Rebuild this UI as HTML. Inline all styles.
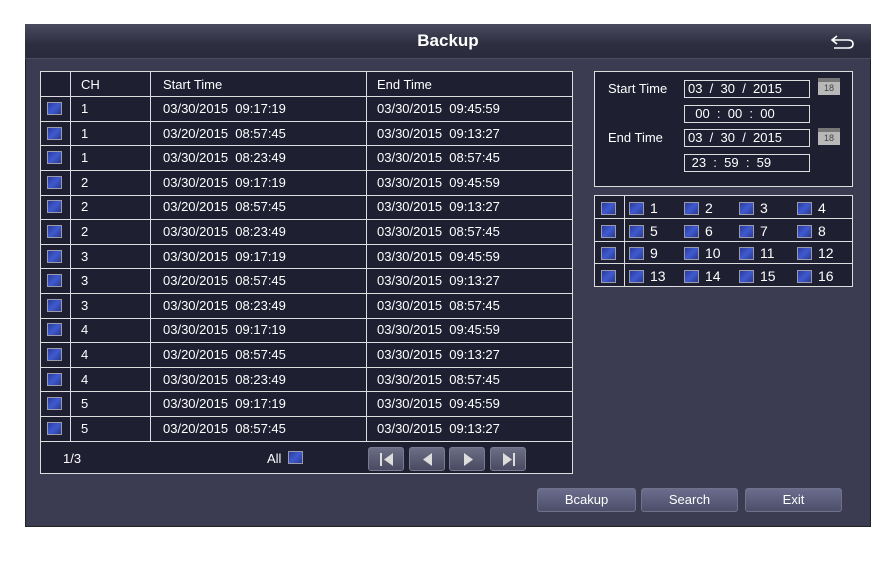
<!DOCTYPE html>
<html><head><meta charset="utf-8"><style>
*{margin:0;padding:0;box-sizing:border-box}
body{width:888px;height:565px;background:#fff;position:relative;overflow:hidden;font-family:"Liberation Sans",sans-serif;color:#fff;font-size:13px}
.p{position:absolute;left:25px;top:24px;width:846px;height:503px;background:#3b3c52;border:1px solid #222;}
.tb{position:absolute;left:25px;top:24px;width:846px;height:35px;background:linear-gradient(#4a4b5e,#2d2e40 60%,#2a2b3c);border-bottom:1px solid #4a4b60}
.tb span{position:absolute;left:0;right:0;top:7px;text-align:center;font-size:17px;font-weight:bold}
.a{position:absolute}
.tbl{position:absolute;left:40px;top:71px;width:533px;height:403px;background:#1e1f31;border:1px solid #ddd}
.hl{position:absolute;height:1px;background:#ddd;left:0;right:0}
.vl{position:absolute;width:1px;background:#ddd}
.t{position:absolute;font-size:13px;line-height:14px}
.cb{position:absolute;width:15px;height:13px;border:1px solid #9a9aaa;background:linear-gradient(135deg,#2a3a9a,#3f5ad0 50%,#2a3a90)}
.nb{position:absolute;top:447px;width:36px;height:24px;border-radius:3px;background:linear-gradient(#6c6e86,#4a4b62);border:1px solid #7a7b90}
.bt{position:absolute;top:488px;height:24px;border-radius:3px;background:linear-gradient(#6a6d8c,#4c4e6a);border:1px solid #70728a;text-align:center;line-height:22px;font-size:13px}
.rb{position:absolute;background:#1e1f31;border:1px solid #ddd}
.in{position:absolute;left:684px;width:126px;height:18px;border:1px solid #ddd;font-size:13px;line-height:16px;padding-left:3px;white-space:pre}
.cal{position:absolute;left:818px;width:22px;height:17px;background:#b8b8b8;border-top:4px solid #777;font-size:9px;color:#444;text-align:center;line-height:12px}
</style></head><body>
<div class="p"></div>
<div class="tb"><span>Backup</span>
<svg class="a" style="left:803px;top:8px" width="28" height="18"><path d="M9 4 L4 8 L9 12 M4 8 H20 Q25 8 25 12 Q25 16 20 16 H6" stroke="#fff" stroke-width="1.6" fill="none"/></svg></div>

<div class="tbl">
<div class="vl" style="left:29px;top:0;height:369px"></div>
<div class="vl" style="left:109px;top:0;height:369px"></div>
<div class="vl" style="left:325px;top:0;height:369px"></div>
<div class="t" style="left:40px;top:6px">CH</div>
<div class="t" style="left:122px;top:6px">Start Time</div>
<div class="t" style="left:336px;top:6px">End Time</div>
<div class="hl" style="top:24px"></div><div class="hl" style="top:49px"></div><div class="hl" style="top:73px"></div><div class="hl" style="top:98px"></div><div class="hl" style="top:123px"></div><div class="hl" style="top:147px"></div><div class="hl" style="top:172px"></div><div class="hl" style="top:196px"></div><div class="hl" style="top:221px"></div><div class="hl" style="top:246px"></div><div class="hl" style="top:270px"></div><div class="hl" style="top:295px"></div><div class="hl" style="top:319px"></div><div class="hl" style="top:344px"></div><div class="hl" style="top:369px"></div>
</div>
<div id="rows"></div>
<div class="t" style="left:63px;top:452px">1/3</div>
<div class="t" style="left:267px;top:452px">All</div>
<div class="cb" style="left:288px;top:451px"></div>
<div class="nb" style="left:368px"><svg width="36" height="24"><rect x="11" y="5" width="2" height="13" fill="#ddd"/><path d="M24 5 L15 11.5 L24 18Z" fill="#ddd"/></svg></div>
<div class="nb" style="left:409px"><svg width="36" height="24"><path d="M22 5 L13 11.5 L22 18Z" fill="#ddd"/></svg></div>
<div class="nb" style="left:449px"><svg width="36" height="24"><path d="M14 5 L23 11.5 L14 18Z" fill="#ddd"/></svg></div>
<div class="nb" style="left:490px"><svg width="36" height="24"><path d="M12 5 L21 11.5 L12 18Z" fill="#ddd"/><rect x="22" y="5" width="2" height="13" fill="#ddd"/></svg></div>

<div class="rb" style="left:594px;top:71px;width:259px;height:116px"></div>
<div class="t" style="left:608px;top:82px">Start Time</div>
<div class="t" style="left:608px;top:131px">End Time</div>
<div class="in" style="top:80px">03  /  30  /  2015</div>
<div class="in" style="top:105px">  00  :  00  :  00</div>
<div class="in" style="top:129px">03  /  30  /  2015</div>
<div class="in" style="top:154px"> 23  :  59  :  59</div>
<div class="cal" style="top:78px">18</div>
<div class="cal" style="top:128px">18</div>

<div class="rb" style="left:594px;top:195px;width:259px;height:92px"></div>
<div class="a" style="left:624px;top:196px;width:1px;height:90px;background:#ddd"></div>
<div class="a" style="left:595px;top:218px;width:257px;height:1px;background:#ddd"></div>
<div class="a" style="left:595px;top:241px;width:257px;height:1px;background:#ddd"></div>
<div class="a" style="left:595px;top:263px;width:257px;height:1px;background:#ddd"></div>
<div id="ch"></div>

<div class="bt" style="left:537px;width:99px">Bcakup</div>
<div class="bt" style="left:641px;width:97px">Search</div>
<div class="bt" style="left:745px;width:97px">Exit</div>
<script>
var d=[["1","03/30/2015  09:17:19","03/30/2015  09:45:59"],["1","03/20/2015  08:57:45","03/30/2015  09:13:27"],["1","03/30/2015  08:23:49","03/30/2015  08:57:45"]];
var h="";
for(var i=0;i<14;i++){var ch=Math.floor(i/3)+1;var r=d[i%3];var y=96+i*24.6;
h+='<div class="cb" style="left:47px;top:'+(y+6)+'px"></div><div class="t" style="left:81px;top:'+(y+6)+'px">'+ch+'</div><div class="t" style="left:163px;top:'+(y+6)+'px;white-space:pre">'+r[1]+'</div><div class="t" style="left:377px;top:'+(y+6)+'px;white-space:pre">'+r[2]+'</div>';}
document.getElementById('rows').innerHTML=h;
var g="",xs=[629,684,739,797];
for(var r=0;r<4;r++){var y=202+r*22.5;g+='<div class="cb" style="left:601px;top:'+y+'px"></div>';
for(var c=0;c<4;c++){g+='<div class="cb" style="left:'+xs[c]+'px;top:'+y+'px"></div><div class="t" style="left:'+(xs[c]+21)+'px;top:'+(y-1)+'px;font-size:14px">'+(r*4+c+1)+'</div>';}}
document.getElementById('ch').innerHTML=g;
</script>
</body></html>
